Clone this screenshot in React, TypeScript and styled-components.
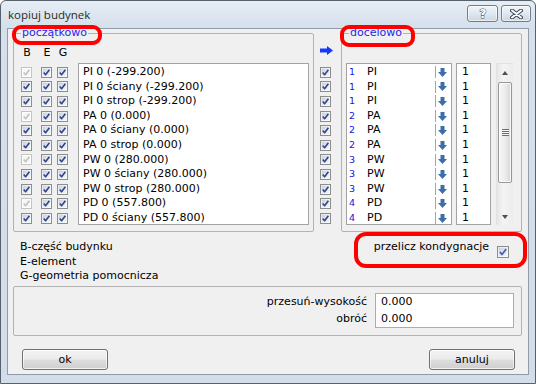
import React from "react";
import styled, { createGlobalStyle } from "styled-components";

const GlobalStyle = createGlobalStyle`
  html, body { margin: 0; padding: 0; background: #ffffff; }
  body { font-family: "DejaVu Sans", "Noto Sans", sans-serif; font-size: 11px; color: #000; }
  *, *::before, *::after { box-sizing: border-box; }
`;

const Window = styled.div`
  position: relative;
  width: 536px;
  height: 384px;
  border: 1px solid #57616d;
  border-radius: 6px 6px 0 0;
  background: linear-gradient(to bottom, #e6edf5 0px, #d5e0eb 27px, #d2dde9 100%);
  display: flex;
  flex-direction: column;
  overflow: hidden;
`;

const TitleBar = styled.div`
  height: 27px;
  flex: none;
  display: flex;
  align-items: flex-start;
  justify-content: space-between;
  padding: 0 4px 0 7px;
`;

const TitleText = styled.span`
  font-family: "Open Sans", "Noto Sans", sans-serif;
  font-size: 11.5px;
  color: #2a2a2a;
  line-height: 16px;
  margin-top: 6px;
`;

const TitleButtons = styled.div`
  display: flex;
  gap: 3px;
  margin-top: 4px;
`;

const CapButton = styled.div<{ $w: number }>`
  width: ${(p) => p.$w}px;
  height: 17px;
  border: 1px solid #6f7d8c;
  border-radius: 3px;
  background: linear-gradient(to bottom, #f1f5f9 0%, #dfe7ef 50%, #ccd7e3 100%);
  box-shadow: inset 0 0 0 1px rgba(255, 255, 255, 0.6);
  display: flex;
  align-items: center;
  justify-content: center;
  svg { display: block; }
`;

const Client = styled.div`
  flex: 1;
  margin: 0 6px 8px;
  border: 1px solid #8e9cab;
  background: #f0f0f0;
  display: flex;
  flex-direction: column;
`;

const TopRow = styled.div`
  display: flex;
  align-items: flex-start;
  padding: 4px 0 0 5px;
`;

const Group = styled.div<{ $w: number; $h: number }>`
  position: relative;
  flex: none;
  width: ${(p) => p.$w}px;
  height: ${(p) => p.$h}px;
  border: 1px solid #b3b3b3;
  border-radius: 2px;
`;

const GroupLabel = styled.span`
  position: absolute;
  top: -8px;
  left: 7px;
  padding: 0 1px;
  background: #f0f0f0;
  color: #2626f2;
  line-height: 14px;
`;

const GroupInner = styled.div<{ $pl: number }>`
  display: flex;
  align-items: flex-start;
  padding-left: ${(p) => p.$pl}px;
`;

const CheckCols = styled.div`
  width: 47px;
  margin-right: 10px;
  padding-top: 12px;
`;

const ColHeader = styled.div`
  display: grid;
  grid-template-columns: 20px 16px 11px;
  height: 14px;
  line-height: 14px;
  margin-bottom: 5px;
  span { width: 11px; text-align: center; padding-left: 1px; }
`;

const CheckRow = styled.div<{ $cols?: string }>`
  display: grid;
  grid-template-columns: ${(p) => p.$cols ?? "20px 16px 11px"};
  align-items: center;
  height: 14.6px;
`;

const ListBox = styled.div<{ $w: number; $pl: number }>`
  flex: none;
  margin-top: 29px;
  width: ${(p) => p.$w}px;
  height: 162px;
  border: 1px solid #a3a3a3;
  background: #ffffff;
  overflow: hidden;
  padding: 1px 0 0 ${(p) => p.$pl}px;
`;

const ListRow = styled.div`
  height: 14.6px;
  line-height: 14.6px;
  white-space: nowrap;
`;

const MidCol = styled.div`
  width: 27px;
  flex: none;
  padding: 13px 0 0 6px;
  svg { display: block; }
`;

const MidChecks = styled.div`
  margin-top: 10px;
`;

const TargetRow = styled.div`
  display: grid;
  grid-template-columns: 20px 68px 1fr;
  height: 14.6px;
  line-height: 14.6px;
`;

const LevelNum = styled.span`
  font-size: 9.5px;
  line-height: 10px;
  color: #1414e6;
  padding: 2px 0 0 2px;
`;

const ArrowCell = styled.span`
  display: flex;
  align-items: center;
  padding-left: 3px;
  background: linear-gradient(#a4a4a4, #a4a4a4) 0 1px / 1px 12px no-repeat;
  svg { display: block; }
`;

const ValueList = styled(ListBox)`
  margin-left: 4px;
`;

const ScrollBar = styled.div`
  flex: none;
  margin: 29px 0 0 5px;
  width: 17px;
  height: 162px;
  border-left: 1px solid #e2e2e2;
  border-top: 1px solid #e2e2e2;
  background: linear-gradient(to right, #e6e6e6, #f4f4f4 40%, #ececec);
  display: flex;
  flex-direction: column;
`;

const ScrollBtn = styled.div`
  height: 17px;
  flex: none;
  display: flex;
  align-items: center;
  justify-content: center;
`;

const Tri = styled.span<{ $down?: boolean }>`
  width: 0;
  height: 0;
  border-left: 3.5px solid transparent;
  border-right: 3.5px solid transparent;
  ${(p) => (p.$down ? "border-top: 4px solid #505050;" : "border-bottom: 4px solid #505050;")}
`;

const Track = styled.div`
  flex: 1;
  padding: 1px 1px 0 1px;
`;

const Thumb = styled.div`
  height: 101px;
  border: 1px solid #979797;
  border-radius: 2px;
  background: linear-gradient(to right, #f7f7f7 0%, #ececec 50%, #d6d6d6 100%);
  box-shadow: inset 0 0 0 1px rgba(255, 255, 255, 0.8);
  display: flex;
  align-items: center;
  justify-content: center;
`;

const Grip = styled.span`
  width: 7px;
  height: 7px;
  background: repeating-linear-gradient(to bottom, #6e6e6e 0px, #6e6e6e 1px, #f4f4f4 1px, #f4f4f4 2px);
`;

const MidRow = styled.div`
  height: 54px;
  flex: none;
  display: flex;
  justify-content: space-between;
  align-items: flex-start;
  padding: 8px 19px 0 12px;
`;

const Legend = styled.div`
  line-height: 14.5px;
`;

const Recalc = styled.div`
  display: flex;
  align-items: flex-start;
  line-height: 14.5px;
  gap: 8px;
`;

const RecalcBox = styled.div`
  margin-top: 6px;
`;

const BottomGroup = styled.div`
  margin-left: 5px;
  width: 509px;
  height: 50px;
  flex: none;
  border: 1px solid #b3b3b3;
  border-radius: 2px;
  display: flex;
  justify-content: flex-end;
  align-items: flex-start;
  padding: 6px 7px 0 0;
`;

const FieldLabels = styled.div`
  text-align: right;
  line-height: 16.5px;
  padding-top: 1px;
  margin-right: 8px;
`;

const FieldBox = styled.div`
  width: 139px;
  height: 35px;
  border: 1px solid #abadb3;
  background: #ffffff;
  line-height: 16.5px;
  padding: 0 5px;
`;

const ButtonRow = styled.div`
  display: flex;
  justify-content: space-between;
  padding: 0 13px 0 14px;
  margin-top: 13px;
`;

const Button = styled.div`
  width: 86px;
  height: 21px;
  border: 1px solid #707070;
  border-radius: 3px;
  background: linear-gradient(to bottom, #f3f3f3 0%, #ebebeb 48%, #dddddd 52%, #cfcfcf 100%);
  box-shadow: inset 0 0 0 1px rgba(255, 255, 255, 0.7);
  display: flex;
  align-items: center;
  justify-content: center;
  line-height: 14px;
`;

const CheckBoxFrame = styled.span<{ $disabled?: boolean; $size: number }>`
  display: block;
  width: ${(p) => p.$size}px;
  height: ${(p) => p.$size}px;
  border: 1px solid ${(p) => (p.$disabled ? "#c4c4c4" : "#8d8d8d")};
  background: ${(p) =>
    p.$disabled
      ? "#f6f6f6"
      : "linear-gradient(135deg, #c3c9d3 0%, #dfe3e9 45%, #f7f7f7 100%)"};
  box-shadow: inset 0 0 0 1px ${(p) => (p.$disabled ? "#ffffff" : "rgba(255,255,255,0.55)")};
  svg { display: block; }
`;

const Annotation = styled.div<{ $x: number; $y: number; $w: number; $h: number; $r: number }>`
  position: absolute;
  left: ${(p) => p.$x}px;
  top: ${(p) => p.$y}px;
  width: ${(p) => p.$w}px;
  height: ${(p) => p.$h}px;
  border: 4px solid #ff0000;
  border-radius: ${(p) => p.$r}px;
  pointer-events: none;
`;

function Check({ disabled, size = 11, color }: { disabled?: boolean; size?: number; color?: string }) {
  const inner = size - 2;
  const stroke = disabled ? "#c2c2c2" : color ?? "#2f4690";
  return (
    <CheckBoxFrame $disabled={disabled} $size={size}>
      <svg width={inner} height={inner} viewBox="0 0 9 9">
        <path d="M1.7 4.5 L3.6 6.7 L7.4 1.8" fill="none" stroke={stroke} strokeWidth="1.6" strokeLinejoin="round" />
      </svg>
    </CheckBoxFrame>
  );
}

function DownArrow() {
  return (
    <svg width="9" height="9" viewBox="0 0 9 9">
      <path d="M2.5 0 H6.5 V4 H9 L4.5 9 L0 4 H2.5 Z" fill="#3d6ea6" />
    </svg>
  );
}

const sources = [
  "PI 0 (-299.200)",
  "PI 0 ściany (-299.200)",
  "PI 0 strop (-299.200)",
  "PA 0 (0.000)",
  "PA 0 ściany (0.000)",
  "PA 0 strop (0.000)",
  "PW 0 (280.000)",
  "PW 0 ściany (280.000)",
  "PW 0 strop (280.000)",
  "PD 0 (557.800)",
  "PD 0 ściany (557.800)",
];

const targets: [number, string][] = [
  [1, "PI"], [1, "PI"], [1, "PI"],
  [2, "PA"], [2, "PA"], [2, "PA"],
  [3, "PW"], [3, "PW"], [3, "PW"],
  [4, "PD"], [4, "PD"],
];

export default function App() {
  return (
    <>
      <GlobalStyle />
      <Window>
        <TitleBar>
          <TitleText>kopiuj budynek</TitleText>
          <TitleButtons>
            <CapButton $w={31}>
              <svg width="10" height="13" viewBox="0 0 10 13">
                <text x="5" y="11" textAnchor="middle" fontFamily="DejaVu Sans, sans-serif" fontWeight="bold" fontSize="12" fill="#ffffff" stroke="#3c4a59" strokeWidth="1" paintOrder="stroke">?</text>
              </svg>
            </CapButton>
            <CapButton $w={30}>
              <svg width="13" height="10" viewBox="0 0 13 10">
                <path d="M2 1.5 L11 8.5 M11 1.5 L2 8.5" stroke="#3c4a59" strokeWidth="4" strokeLinecap="round" />
                <path d="M2 1.5 L11 8.5 M11 1.5 L2 8.5" stroke="#ffffff" strokeWidth="2" strokeLinecap="round" />
              </svg>
            </CapButton>
          </TitleButtons>
        </TitleBar>
        <Client>
          <TopRow>
            <Group $w={301} $h={199}>
              <GroupLabel>początkowo</GroupLabel>
              <GroupInner $pl={7}>
                <CheckCols>
                  <ColHeader>
                    <span>B</span>
                    <span>E</span>
                    <span>G</span>
                  </ColHeader>
                  {sources.map((s, i) => (
                    <CheckRow key={s}>
                      <Check disabled={i % 3 === 0} />
                      <Check />
                      <Check />
                    </CheckRow>
                  ))}
                </CheckCols>
                <ListBox $w={231} $pl={4}>
                  {sources.map((s) => (
                    <ListRow key={s}>{s}</ListRow>
                  ))}
                </ListBox>
              </GroupInner>
            </Group>
            <MidCol>
              <svg width="13" height="9" viewBox="0 0 13 9">
                <path d="M0 2.5 H7 V0 L13 4.5 L7 9 V6.5 H0 Z" fill="#1438ff" />
              </svg>
              <MidChecks>
                {sources.map((s) => (
                  <CheckRow key={s} $cols="11px">
                    <Check />
                  </CheckRow>
                ))}
              </MidChecks>
            </MidCol>
            <Group $w={181} $h={199}>
              <GroupLabel>docelowo</GroupLabel>
              <GroupInner $pl={4}>
                <ListBox $w={106} $pl={0}>
                  {targets.map(([n, name], i) => (
                    <TargetRow key={i}>
                      <LevelNum>{n}</LevelNum>
                      <span>{name}</span>
                      <ArrowCell>
                        <DownArrow />
                      </ArrowCell>
                    </TargetRow>
                  ))}
                </ListBox>
                <ValueList $w={35} $pl={5}>
                  {targets.map((_, i) => (
                    <ListRow key={i}>1</ListRow>
                  ))}
                </ValueList>
                <ScrollBar>
                  <ScrollBtn>
                    <Tri />
                  </ScrollBtn>
                  <Track>
                    <Thumb>
                      <Grip />
                    </Thumb>
                  </Track>
                  <ScrollBtn>
                    <Tri $down />
                  </ScrollBtn>
                </ScrollBar>
              </GroupInner>
            </Group>
          </TopRow>
          <MidRow>
            <Legend>
              <div>B-część budynku</div>
              <div>E-element</div>
              <div>G-geometria pomocnicza</div>
            </Legend>
            <Recalc>
              <span>przelicz kondygnacje</span>
              <RecalcBox>
                <Check size={12} color="#4660b4" />
              </RecalcBox>
            </Recalc>
          </MidRow>
          <BottomGroup>
            <FieldLabels>
              <div>przesuń-wysokość</div>
              <div>obróć</div>
            </FieldLabels>
            <FieldBox>
              <div>0.000</div>
              <div>0.000</div>
            </FieldBox>
          </BottomGroup>
          <ButtonRow>
            <Button>ok</Button>
            <Button>anuluj</Button>
          </ButtonRow>
        </Client>
        <Annotation $x={11} $y={24} $w={90} $h={20} $r={9} />
        <Annotation $x={339} $y={24} $w={75} $h={22} $r={9} />
        <Annotation $x={353} $y={231} $w={173} $h={36} $r={12} />
      </Window>
    </>
  );
}
